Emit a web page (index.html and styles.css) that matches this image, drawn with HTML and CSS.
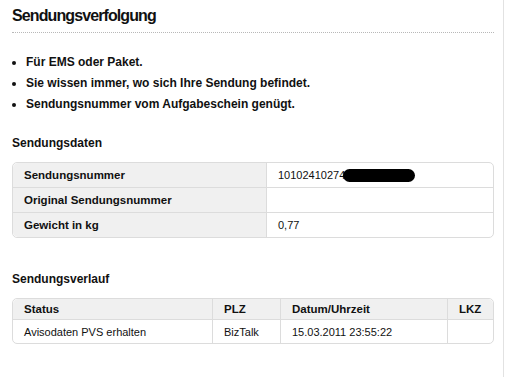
FILE: index.html
```html
<!DOCTYPE html>
<html lang="de">
<head>
    <meta charset="UTF-8">
    <title>Sendungsverfolgung</title>
    <link rel="stylesheet" href="styles.css">
</head>
<body>
    <div class="page">
        <h1>Sendungsverfolgung</h1>
        <ul class="info">
            <li>Für EMS oder Paket.</li>
            <li>Sie wissen immer, wo sich Ihre Sendung befindet.</li>
            <li>Sendungsnummer vom Aufgabeschein genügt.</li>
        </ul>

        <h2>Sendungsdaten</h2>
        <table class="data">
            <tr>
                <th>Sendungsnummer</th>
                <td>10102410274<span class="redacted"></span></td>
            </tr>
            <tr>
                <th>Original Sendungsnummer</th>
                <td></td>
            </tr>
            <tr>
                <th>Gewicht in kg</th>
                <td>0,77</td>
            </tr>
        </table>

        <h2 class="history-title">Sendungsverlauf</h2>
        <table class="history">
            <tr>
                <th class="col-status">Status</th>
                <th class="col-plz">PLZ</th>
                <th class="col-date">Datum/Uhrzeit</th>
                <th class="col-lkz">LKZ</th>
            </tr>
            <tr>
                <td>Avisodaten PVS erhalten</td>
                <td>BizTalk</td>
                <td>15.03.2011 23:55:22</td>
                <td></td>
            </tr>
        </table>
    </div>
</body>
</html>
```

FILE: styles.css
```css
body {
    margin: 0;
    background: #fff;
    font-family: "Liberation Sans", Arial, sans-serif;
    color: #111;
}
.page {
    width: 482px;
    min-height: 377px;
    padding: 6px 9px 0 12px;
    border-right: 1px solid #e2e2e2;
}
h1 {
    margin: 0;
    font-size: 16px;
    letter-spacing: -0.9px;
    font-weight: bold;
    line-height: 20px;
    padding-bottom: 6px;
    border-bottom: 1px dotted #b8b8b8;
}
.info {
    margin: 22px 0 0 0;
    padding: 0 0 0 14px;
    font-size: 12px;
    font-weight: bold;
}
.info li {
    line-height: 14px;
    margin-bottom: 7px;
}
h2 {
    margin: 25px 0 12px 0;
    font-size: 12px;
    font-weight: bold;
    line-height: 14px;
}
table {
    width: 482px;
    border-collapse: separate;
    border-spacing: 0;
    border: 1px solid #dcdcdc;
    border-radius: 5px;
    font-size: 11px;
}
th, td {
    text-align: left;
    padding: 0 0 0 11px;
    border-bottom: 1px solid #dcdcdc;
}
th {
    font-size: 11.5px;
}
tr:last-child th, tr:last-child td {
    border-bottom: none;
}
.data th {
    width: 242px;
    height: 24px;
    background: #f0f0f0;
    border-right: 1px solid #dcdcdc;
}
.data tr:first-child th { border-top-left-radius: 5px; }
.data tr:last-child th { border-bottom-left-radius: 5px; }
.data td {
    height: 24px;
}
.redacted {
    display: inline-block;
    width: 72px;
    height: 13px;
    margin-left: -2px;
    vertical-align: -3px;
    background: #000;
    border-radius: 7px;
}
.history-title {
    margin: 34px 0 12px 0;
}
.history th {
    height: 20px;
    background: #f0f0f0;
    border-right: 1px solid #dcdcdc;
}
.history th:first-child { border-top-left-radius: 5px; }
.history th:last-child { border-top-right-radius: 5px; border-right: none; }
.history td {
    height: 23px;
    border-right: 1px solid #dcdcdc;
}
.history td:last-child { border-right: none; }
.col-status { width: 188px; }
.col-plz { width: 56px; }
.col-date { width: 155px; }
```
